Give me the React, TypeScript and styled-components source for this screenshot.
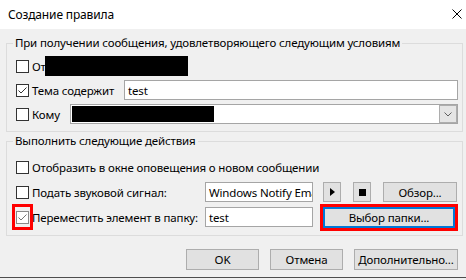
import React from 'react'
import styled, { createGlobalStyle, css } from 'styled-components'

const GlobalStyle = createGlobalStyle`
    html, body {
        margin: 0;
        padding: 0;
        background: #f0f0f0;
    }
    body {
        font-family: 'Noto Sans', 'Segoe UI', sans-serif;
        font-size: 11.5px;
        letter-spacing: -0.15px;
        color: #000;
    }
`

const Window = styled.div`
    width: 466px;
    height: 278px;
    box-sizing: border-box;
    border-bottom: 1px solid #4d4d4d;
    background: #f0f0f0;
    display: flex;
    flex-direction: column;
    overflow: hidden;
`

const TitleBar = styled.div`
    height: 29px;
    flex: none;
    box-sizing: border-box;
    background: #fff;
    display: flex;
    align-items: center;
    justify-content: space-between;
    padding: 0 4px 1px 8px;
    font-size: 12px;
`

const Content = styled.div`
    padding: 6px 3px 0 6px;
    display: flex;
    flex-direction: column;
    gap: 1px;
`

const Group = styled.fieldset<{ $top: number; $bottom: number; $gap: number }>`
    margin: 0;
    min-width: 0;
    border: 1px solid #dcdcdc;
    padding: ${p => p.$top}px 4px ${p => p.$bottom}px 9px;
    display: flex;
    flex-direction: column;
    gap: ${p => p.$gap}px;
`

const Legend = styled.legend`
    padding: 0 2px;
    margin-left: -3px;
    line-height: 16px;
`

const Row = styled.div`
    display: flex;
    align-items: center;
    height: 20px;
`

const Check = styled.span<{ $muted?: boolean }>`
    width: 13px;
    height: 13px;
    box-sizing: border-box;
    flex: none;
    border: 1px solid ${p => (p.$muted ? '#8a8a8a' : '#333')};
    background: #fff;
    display: flex;
    align-items: center;
    justify-content: center;
`

// red annotation frame drawn round a control
const MarkFrame = styled.span`
    width: 21px;
    height: 26px;
    box-sizing: border-box;
    flex: none;
    border: 3px solid #f00;
    margin: 0 -4px 0 -4px;
    display: flex;
    align-items: center;
    justify-content: center;
`

const Label = styled.span<{ $w?: number }>`
    margin-left: 3px;
    white-space: nowrap;
    flex: none;
    ${p =>
        p.$w &&
        css`
            width: ${p.$w}px;
        `}
`

const Redacted = styled.div<{ $w: number; $h: number }>`
    width: ${p => p.$w}px;
    height: ${p => p.$h}px;
    background: #000;
    flex: none;
`

const Field = styled.div<{ $w?: number }>`
    height: 20px;
    box-sizing: border-box;
    border: 1px solid #a5a5a5;
    background: #fff;
    padding: 0 3px;
    display: flex;
    align-items: center;
    white-space: nowrap;
    overflow: hidden;
    ${p =>
        p.$w
            ? css`
                  width: ${p.$w}px;
                  flex: none;
              `
            : css`
                  flex: 1;
              `}
`

const ComboBox = styled.div`
    flex: 1;
    height: 20px;
    box-sizing: border-box;
    border: 1px solid #a5a5a5;
    background: #fff;
    padding: 0 0 0 1px;
    display: flex;
    align-items: center;
    justify-content: space-between;
`

const DropButton = styled.div`
    width: 18px;
    height: 18px;
    box-sizing: border-box;
    border: 1px solid #adadad;
    background: #e5e5e5;
    display: flex;
    align-items: center;
    justify-content: center;
`

const Button = styled.button<{ $w: number; $h?: number; $gap?: number; $focused?: boolean; $marked?: boolean }>`
    box-sizing: border-box;
    width: ${p => p.$w}px;
    height: ${p => p.$h ?? 20}px;
    margin: 0 0 0 ${p => p.$gap ?? 0}px;
    padding: 0;
    flex: none;
    font: inherit;
    letter-spacing: inherit;
    color: #000;
    background: #e1e1e1;
    border: 1px solid #adadad;
    display: flex;
    align-items: center;
    justify-content: center;
    ${p =>
        p.$focused &&
        css`
            border: 2px solid #0078d7;
        `}
    ${p =>
        p.$marked &&
        css`
            outline: 3px solid #f00;
        `}
`

const PlayGlyph = styled.span`
    width: 0;
    height: 0;
    border-top: 4px solid transparent;
    border-bottom: 4px solid transparent;
    border-left: 5px solid #000;
    margin-left: 1px;
`

const StopGlyph = styled.span`
    width: 7px;
    height: 7px;
    background: #000;
`

const Footer = styled.div`
    display: flex;
    justify-content: flex-end;
    gap: 11px;
    padding: 13px 8px 0 0;
`

const Tick = ({ color }: { color: string }) => (
    <svg width="11" height="11" viewBox="0 0 11 11">
        <path d="M1.5 5.5 L4 8 L9.5 2.5" fill="none" stroke={color} strokeWidth="1" />
    </svg>
)

const CloseIcon = () => (
    <svg width="10" height="10" viewBox="0 0 10 10">
        <path d="M0.5 0.5 L9.5 9.5 M9.5 0.5 L0.5 9.5" stroke="#000" strokeWidth="1" />
    </svg>
)

const Chevron = () => (
    <svg width="8" height="5" viewBox="0 0 8 5">
        <path d="M0.5 0.5 L4 4 L7.5 0.5" fill="none" stroke="#606060" strokeWidth="1" />
    </svg>
)

const App = () => (
    <>
        <GlobalStyle />
        <Window>
            <TitleBar>
                <span>Создание правила</span>
                <CloseIcon />
            </TitleBar>
            <Content>
                <Group $top={5} $bottom={7} $gap={4}>
                    <Legend>При получении сообщения, удовлетворяющего следующим условиям</Legend>
                    <Row>
                        <Check />
                        <Label $w={13}>От</Label>
                        <Redacted $w={143} $h={20} />
                    </Row>
                    <Row>
                        <Check>
                            <Tick color="#333" />
                        </Check>
                        <Label $w={92}>Тема содержит</Label>
                        <Field>test</Field>
                    </Row>
                    <Row>
                        <Check />
                        <Label $w={38}>Кому</Label>
                        <ComboBox>
                            <Redacted $w={142} $h={16} />
                            <DropButton>
                                <Chevron />
                            </DropButton>
                        </ComboBox>
                    </Row>
                </Group>
                <Group $top={8} $bottom={8} $gap={5}>
                    <Legend>Выполнить следующие действия</Legend>
                    <Row>
                        <Check />
                        <Label>Отобразить в окне оповещения о новом сообщении</Label>
                    </Row>
                    <Row>
                        <Check />
                        <Label $w={173}>Подать звуковой сигнал:</Label>
                        <Field $w={108}>Windows Notify Email</Field>
                        <Button $w={18} $gap={10}>
                            <PlayGlyph />
                        </Button>
                        <Button $w={18} $gap={12}>
                            <StopGlyph />
                        </Button>
                        <Button $w={74} $gap={12}>
                            Обзор...
                        </Button>
                    </Row>
                    <Row>
                        <MarkFrame>
                            <Check $muted>
                                <Tick color="#777" />
                            </Check>
                        </MarkFrame>
                        <Label $w={173}>Переместить элемент в папку:</Label>
                        <Field $w={108}>test</Field>
                        <Button $w={132} $h={21} $gap={10} $focused $marked>
                            Выбор папки...
                        </Button>
                    </Row>
                </Group>
            </Content>
            <Footer>
                <Button $w={73} $h={21}>
                    OK
                </Button>
                <Button $w={73} $h={21}>
                    Отмена
                </Button>
                <Button $w={104} $h={21}>
                    Дополнительно...
                </Button>
            </Footer>
        </Window>
    </>
)

export default App
